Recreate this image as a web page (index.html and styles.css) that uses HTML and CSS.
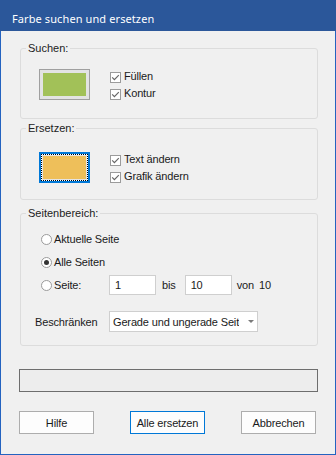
FILE: index.html
```html
<!DOCTYPE html>
<html lang="de">
<head>
<meta charset="utf-8">
<title>Farbe suchen und ersetzen</title>
<link rel="stylesheet" href="styles.css">
</head>
<body>
<div class="window">
  <div class="titlebar">Farbe suchen und ersetzen</div>
  <div class="content">
    <fieldset class="group g1">
      <legend>Suchen:</legend>
      <div class="swatch-row">
        <div class="swatch"><div class="fill green"></div></div>
        <div class="checks">
          <div class="check"><span class="box"><svg width="9" height="9" viewBox="0 0 9 9"><polyline points="1.2,4.4 3.4,6.6 7.8,2.2" fill="none" stroke="#666" stroke-width="1.2"/></svg></span>Füllen</div>
          <div class="check"><span class="box"><svg width="9" height="9" viewBox="0 0 9 9"><polyline points="1.2,4.4 3.4,6.6 7.8,2.2" fill="none" stroke="#666" stroke-width="1.2"/></svg></span>Kontur</div>
        </div>
      </div>
    </fieldset>

    <fieldset class="group g2">
      <legend>Ersetzen:</legend>
      <div class="swatch-row">
        <div class="swatch-focus"><div class="focus"><div class="focus-pad"><div class="fill yellow"></div></div></div></div>
        <div class="checks">
          <div class="check"><span class="box"><svg width="9" height="9" viewBox="0 0 9 9"><polyline points="1.2,4.4 3.4,6.6 7.8,2.2" fill="none" stroke="#666" stroke-width="1.2"/></svg></span>Text ändern</div>
          <div class="check"><span class="box"><svg width="9" height="9" viewBox="0 0 9 9"><polyline points="1.2,4.4 3.4,6.6 7.8,2.2" fill="none" stroke="#666" stroke-width="1.2"/></svg></span>Grafik ändern</div>
        </div>
      </div>
    </fieldset>

    <fieldset class="group g3">
      <legend>Seitenbereich:</legend>
      <div class="range">
        <div class="radio-row"><span class="radio"></span>Aktuelle Seite</div>
        <div class="radio-row"><span class="radio on"></span>Alle Seiten</div>
        <div class="radio-row">
          <span class="seite-label"><span class="radio"></span>Seite:</span>
          <span class="input">1</span>
          <span class="bis">bis</span>
          <span class="input">10</span>
          <span class="von">von</span>
          <span class="total">10</span>
        </div>
        <div class="limit-row">
          <span class="limit-label">Beschränken</span>
          <div class="select">
            <span class="select-text">Gerade und ungerade Seiten</span>
            <span class="arrow"></span>
          </div>
        </div>
      </div>
    </fieldset>

    <div class="progress"></div>

    <div class="buttons">
      <button class="btn">Hilfe</button>
      <button class="btn default">Alle ersetzen</button>
      <button class="btn">Abbrechen</button>
    </div>
  </div>
</div>
</body>
</html>
```
FILE: styles.css
```css
* {
  box-sizing: border-box;
}

body {
  margin: 0;
  background: #f0f0f0;
  font-family: "Liberation Sans", Arial, sans-serif;
  font-size: 11px;
  letter-spacing: -0.15px;
  color: #1a1a1a;
}

.window {
  width: 336px;
  height: 455px;
  display: flex;
  flex-direction: column;
}

.titlebar {
  height: 31px;
  flex: none;
  background: #2b579a;
  color: #ffffff;
  font-family: "Noto Sans", "Open Sans", sans-serif;
  font-size: 11px;
  letter-spacing: 0.1px;
  line-height: 25px;
  padding: 6px 0 0 12px;
  white-space: nowrap;
}

.content {
  flex: 1;
  border: 1px solid #2463c0;
  border-top: 0;
  padding-left: 18px;
}

.group {
  margin: 0 0 0 1px;
  width: 298px;
  padding: 0;
  border: 1px solid #dcdcdc;
  border-radius: 3px;
  min-inline-size: 0;
}

.group legend {
  margin-left: 5px;
  padding: 0 2px;
  line-height: 13px;
  font-size: 11px;
  letter-spacing: 0;
  color: #222;
}

.g1 { margin-top: 11px; }
.g2 { margin-top: 3px; }
.g3 { margin-top: 7px; }

.swatch-row {
  display: flex;
  align-items: center;
  padding: 14px 0 18px 18px;
}

.g2 .swatch-row {
  padding: 17px 0 16px 18px;
}

.swatch {
  width: 51px;
  height: 31px;
  border: 1px solid #a0a0a0;
  background: #e3e3e3;
  padding: 3px;
}

.swatch-focus {
  width: 51px;
  height: 31px;
  border: 2px solid #0078d7;
}

.focus {
  height: 100%;
  border: 1px dotted #000;
  background: #ffffff;
}

.focus-pad {
  height: 100%;
  padding: 1px;
  background: #e3e3e3;
}

.fill {
  width: 100%;
  height: 100%;
}

.green { background: #a2c158; }
.yellow { background: #eebf5a; }

.checks {
  margin: -2px 0 -2px 20px;
  display: flex;
  flex-direction: column;
}

.check {
  height: 17px;
  display: flex;
  align-items: center;
}

.box {
  width: 11px;
  height: 11px;
  margin: 3px 3px 0 0;
  border: 1px solid #9b9b9b;
  background: #ffffff;
  display: flex;
}

.range {
  padding: 9px 0 13px 14px;
}

.radio-row {
  height: 20px;
  margin: 0 0 3px 6px;
  display: flex;
  align-items: center;
}

.radio {
  width: 11px;
  height: 11px;
  margin-right: 2px;
  border: 1px solid #9b9b9b;
  border-radius: 50%;
  background: #ffffff;
  display: flex;
  align-items: center;
  justify-content: center;
}

.radio.on::after {
  content: "";
  width: 5px;
  height: 5px;
  border-radius: 50%;
  background: #333;
}

.seite-label {
  width: 68px;
  display: flex;
  align-items: center;
}

.input {
  width: 47px;
  height: 20px;
  border: 1px solid #cfcfcf;
  background: #ffffff;
  padding-left: 5px;
  line-height: 18px;
}

.bis {
  margin: 0 9px 0 6px;
}

.von {
  margin-left: 5px;
}

.total {
  margin-left: 5px;
}

.limit-row {
  margin-top: 16px;
  display: flex;
  align-items: center;
}

.limit-label {
  width: 74px;
}

.select {
  width: 149px;
  height: 21px;
  border: 1px solid #cfcfcf;
  background: #ffffff;
  display: flex;
  align-items: center;
  padding-left: 3px;
}

.select-text {
  width: 126px;
  overflow: hidden;
  white-space: nowrap;
}

.arrow {
  margin-left: 9px;
  width: 0;
  height: 0;
  border-left: 3px solid transparent;
  border-right: 3px solid transparent;
  border-top: 3px solid #7a7a7a;
}

.progress {
  margin-top: 23px;
  width: 299px;
  height: 23px;
  border: 1px solid #6e6e6e;
  background: #ededed;
}

.buttons {
  margin-top: 19px;
  width: 297px;
  display: flex;
  justify-content: space-between;
}

.btn {
  width: 75px;
  height: 23px;
  padding: 0;
  border: 1px solid #adadad;
  background: #fdfdfd;
  font-family: "Liberation Sans", Arial, sans-serif;
  font-size: 11px;
  letter-spacing: -0.15px;
  color: #1a1a1a;
}

.btn.default {
  border-color: #0078d7;
}
```
